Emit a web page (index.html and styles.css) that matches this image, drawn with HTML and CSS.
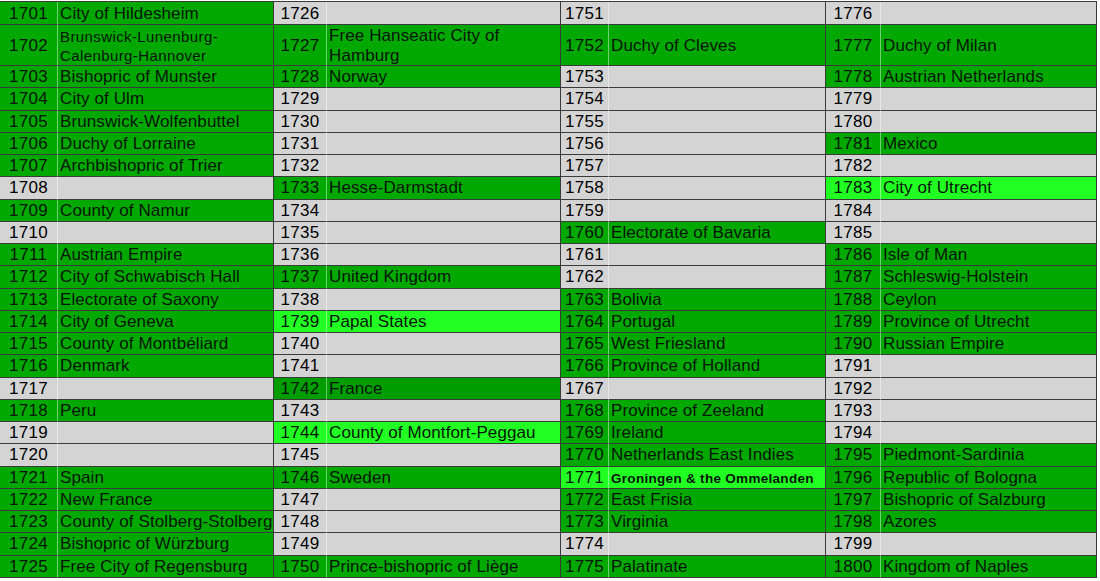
FILE: index.html
```html
<!DOCTYPE html>
<html>
<head>
<meta charset="utf-8">
<link rel="stylesheet" href="styles.css">
</head>
<body>
<div class="sheet">
  <div class="p g"><span class="n">1701</span><span class="t">City of Hildesheim</span></div>
  <div class="p e"><span class="n">1726</span><span class="t"></span></div>
  <div class="p e"><span class="n">1751</span><span class="t"></span></div>
  <div class="p e"><span class="n">1776</span><span class="t"></span></div>

  <div class="p g"><span class="n">1702</span><span class="t wrap small">Brunswick-Lunenburg-Calenburg-Hannover</span></div>
  <div class="p g"><span class="n">1727</span><span class="t wrap">Free Hanseatic City of Hamburg</span></div>
  <div class="p g"><span class="n">1752</span><span class="t">Duchy of Cleves</span></div>
  <div class="p g"><span class="n">1777</span><span class="t">Duchy of Milan</span></div>

  <div class="p g"><span class="n">1703</span><span class="t">Bishopric of Munster</span></div>
  <div class="p g"><span class="n">1728</span><span class="t">Norway</span></div>
  <div class="p e"><span class="n">1753</span><span class="t"></span></div>
  <div class="p g"><span class="n">1778</span><span class="t">Austrian Netherlands</span></div>

  <div class="p g"><span class="n">1704</span><span class="t">City of Ulm</span></div>
  <div class="p e"><span class="n">1729</span><span class="t"></span></div>
  <div class="p e"><span class="n">1754</span><span class="t"></span></div>
  <div class="p e"><span class="n">1779</span><span class="t"></span></div>

  <div class="p g"><span class="n">1705</span><span class="t">Brunswick-Wolfenbuttel</span></div>
  <div class="p e"><span class="n">1730</span><span class="t"></span></div>
  <div class="p e"><span class="n">1755</span><span class="t"></span></div>
  <div class="p e"><span class="n">1780</span><span class="t"></span></div>

  <div class="p g"><span class="n">1706</span><span class="t">Duchy of Lorraine</span></div>
  <div class="p e"><span class="n">1731</span><span class="t"></span></div>
  <div class="p e"><span class="n">1756</span><span class="t"></span></div>
  <div class="p g"><span class="n">1781</span><span class="t">Mexico</span></div>

  <div class="p g"><span class="n">1707</span><span class="t">Archbishopric of Trier</span></div>
  <div class="p e"><span class="n">1732</span><span class="t"></span></div>
  <div class="p e"><span class="n">1757</span><span class="t"></span></div>
  <div class="p e"><span class="n">1782</span><span class="t"></span></div>

  <div class="p e"><span class="n">1708</span><span class="t"></span></div>
  <div class="p g"><span class="n">1733</span><span class="t">Hesse-Darmstadt</span></div>
  <div class="p e"><span class="n">1758</span><span class="t"></span></div>
  <div class="p lg"><span class="n">1783</span><span class="t">City of Utrecht</span></div>

  <div class="p g"><span class="n">1709</span><span class="t">County of Namur</span></div>
  <div class="p e"><span class="n">1734</span><span class="t"></span></div>
  <div class="p e"><span class="n">1759</span><span class="t"></span></div>
  <div class="p e"><span class="n">1784</span><span class="t"></span></div>

  <div class="p e"><span class="n">1710</span><span class="t"></span></div>
  <div class="p e"><span class="n">1735</span><span class="t"></span></div>
  <div class="p g"><span class="n">1760</span><span class="t">Electorate of Bavaria</span></div>
  <div class="p e"><span class="n">1785</span><span class="t"></span></div>

  <div class="p g"><span class="n">1711</span><span class="t">Austrian Empire</span></div>
  <div class="p e"><span class="n">1736</span><span class="t"></span></div>
  <div class="p e"><span class="n">1761</span><span class="t"></span></div>
  <div class="p g"><span class="n">1786</span><span class="t">Isle of Man</span></div>

  <div class="p g"><span class="n">1712</span><span class="t">City of Schwabisch Hall</span></div>
  <div class="p g"><span class="n">1737</span><span class="t">United Kingdom</span></div>
  <div class="p e"><span class="n">1762</span><span class="t"></span></div>
  <div class="p g"><span class="n">1787</span><span class="t">Schleswig-Holstein</span></div>

  <div class="p g"><span class="n">1713</span><span class="t">Electorate of Saxony</span></div>
  <div class="p e"><span class="n">1738</span><span class="t"></span></div>
  <div class="p g"><span class="n">1763</span><span class="t">Bolivia</span></div>
  <div class="p g"><span class="n">1788</span><span class="t">Ceylon</span></div>

  <div class="p g"><span class="n">1714</span><span class="t">City of Geneva</span></div>
  <div class="p lg"><span class="n">1739</span><span class="t">Papal States</span></div>
  <div class="p g"><span class="n">1764</span><span class="t">Portugal</span></div>
  <div class="p g"><span class="n">1789</span><span class="t">Province of Utrecht</span></div>

  <div class="p g"><span class="n">1715</span><span class="t">County of Montbéliard</span></div>
  <div class="p e"><span class="n">1740</span><span class="t"></span></div>
  <div class="p g"><span class="n">1765</span><span class="t">West Friesland</span></div>
  <div class="p g"><span class="n">1790</span><span class="t">Russian Empire</span></div>

  <div class="p g"><span class="n">1716</span><span class="t">Denmark</span></div>
  <div class="p e"><span class="n">1741</span><span class="t"></span></div>
  <div class="p g"><span class="n">1766</span><span class="t">Province of Holland</span></div>
  <div class="p e"><span class="n">1791</span><span class="t"></span></div>

  <div class="p e"><span class="n">1717</span><span class="t"></span></div>
  <div class="p dg"><span class="n">1742</span><span class="t">France</span></div>
  <div class="p e"><span class="n">1767</span><span class="t"></span></div>
  <div class="p e"><span class="n">1792</span><span class="t"></span></div>

  <div class="p g"><span class="n">1718</span><span class="t">Peru</span></div>
  <div class="p e"><span class="n">1743</span><span class="t"></span></div>
  <div class="p g"><span class="n">1768</span><span class="t">Province of Zeeland</span></div>
  <div class="p e"><span class="n">1793</span><span class="t"></span></div>

  <div class="p e"><span class="n">1719</span><span class="t"></span></div>
  <div class="p lg"><span class="n">1744</span><span class="t">County of Montfort-Peggau</span></div>
  <div class="p g"><span class="n">1769</span><span class="t">Ireland</span></div>
  <div class="p e"><span class="n">1794</span><span class="t"></span></div>

  <div class="p e"><span class="n">1720</span><span class="t"></span></div>
  <div class="p e"><span class="n">1745</span><span class="t"></span></div>
  <div class="p g"><span class="n">1770</span><span class="t">Netherlands East Indies</span></div>
  <div class="p g"><span class="n">1795</span><span class="t">Piedmont-Sardinia</span></div>

  <div class="p g"><span class="n">1721</span><span class="t">Spain</span></div>
  <div class="p g"><span class="n">1746</span><span class="t">Sweden</span></div>
  <div class="p lg"><span class="n">1771</span><span class="t bold">Groningen &amp; the Ommelanden</span></div>
  <div class="p g"><span class="n">1796</span><span class="t">Republic of Bologna</span></div>

  <div class="p g"><span class="n">1722</span><span class="t">New France</span></div>
  <div class="p e"><span class="n">1747</span><span class="t"></span></div>
  <div class="p g"><span class="n">1772</span><span class="t">East Frisia</span></div>
  <div class="p g"><span class="n">1797</span><span class="t">Bishopric of Salzburg</span></div>

  <div class="p g"><span class="n">1723</span><span class="t">County of Stolberg-Stolberg</span></div>
  <div class="p e"><span class="n">1748</span><span class="t"></span></div>
  <div class="p g"><span class="n">1773</span><span class="t">Virginia</span></div>
  <div class="p g"><span class="n">1798</span><span class="t">Azores</span></div>

  <div class="p g"><span class="n">1724</span><span class="t">Bishopric of Würzburg</span></div>
  <div class="p e"><span class="n">1749</span><span class="t"></span></div>
  <div class="p e"><span class="n">1774</span><span class="t"></span></div>
  <div class="p e"><span class="n">1799</span><span class="t"></span></div>

  <div class="p g"><span class="n">1725</span><span class="t">Free City of Regensburg</span></div>
  <div class="p g"><span class="n">1750</span><span class="t">Prince-bishopric of Liège</span></div>
  <div class="p g"><span class="n">1775</span><span class="t">Palatinate</span></div>
  <div class="p g"><span class="n">1800</span><span class="t">Kingdom of Naples</span></div>
</div>
</body>
</html>
```

FILE: styles.css
```css
html, body {
  margin: 0;
  padding: 0;
  background: #ffffff;
}

body {
  font-family: "Liberation Sans", Arial, sans-serif;
}

.sheet {
  display: grid;
  width: 1097px;
  margin-top: 1px;
  border-top: 1px solid #3a3a3a;
  grid-template-columns: 58px 216px 53px 234px 48px 217px 55px 216px;
  grid-template-rows: 23px 41px repeat(23, 22.26px);
}

.p {
  display: contents;
}

.n,
.t {
  box-sizing: border-box;
  display: flex;
  align-items: center;
  padding-top: 1px;
  font-size: 17px;
  letter-spacing: 0.1px;
  white-space: nowrap;
  overflow: hidden;
  border-bottom: 1px solid #3a3a3a;
  color: #000;
}

.n {
  justify-content: center;
  letter-spacing: 0.3px;
  border-right: 1px solid rgba(255, 255, 255, 0.45);
}

.t {
  padding-left: 2px;
  border-right: 1px solid #3a3a3a;
}

.wrap {
  white-space: normal;
  line-height: 20px;
}

.small {
  font-size: 15px;
  letter-spacing: 0.4px;
  line-height: 19px;
}

.bold {
  font-weight: bold;
  font-size: 13.5px;
  letter-spacing: 0.3px;
  padding-top: 3px;
}

.g > * {
  background: #00a800;
  color: #061606;
}

.dg > * {
  background: #009d00;
  color: #061606;
}

.lg > * {
  background: #22ff22;
  color: #061606;
}

.e > * {
  background: #d4d4d4;
  color: #000;
}
```
